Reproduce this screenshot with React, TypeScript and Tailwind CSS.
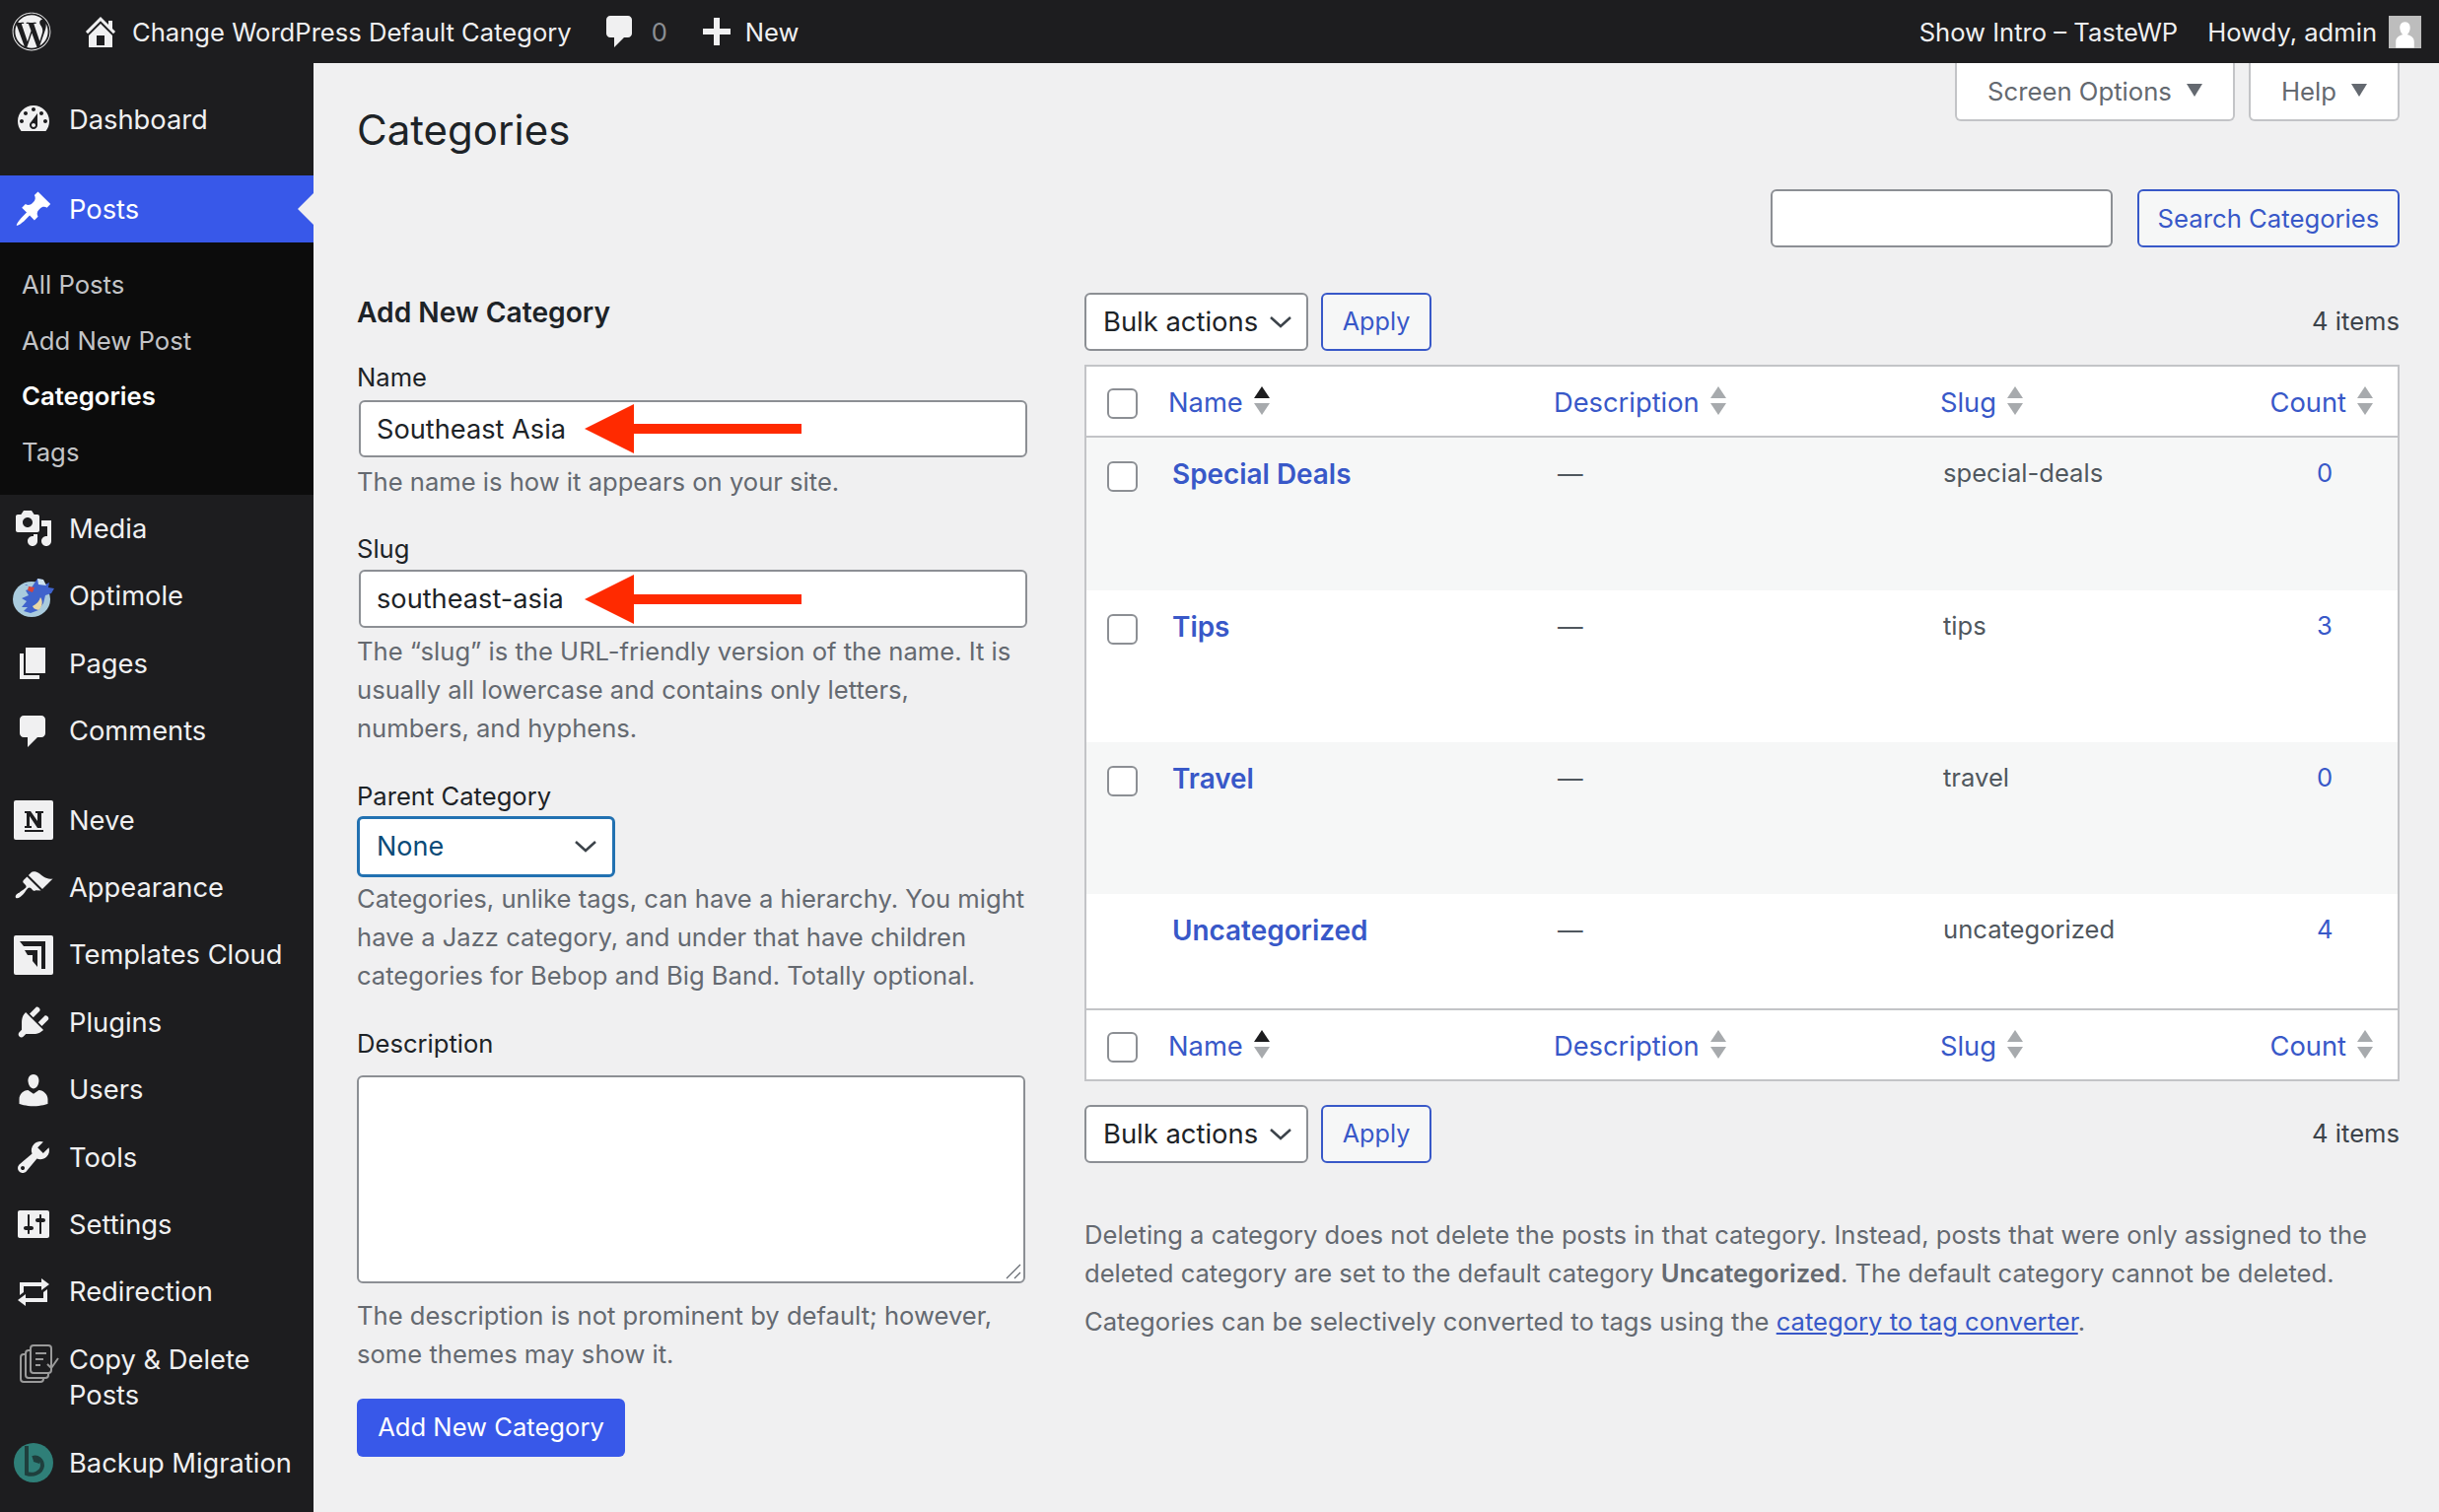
import type { ReactNode } from "react";
import { FaWordpress } from "react-icons/fa";

// dashicons paths, 20x20 box
const paths = {
  dashboard:
    "M3.76 16h12.48c1.1-1.37 1.76-3.11 1.76-5 0-4.42-3.58-8-8-8s-8 3.58-8 8c0 1.89.66 3.63 1.76 5zM10 4c.55 0 1 .45 1 1s-.45 1-1 1-1-.45-1-1 .45-1 1-1zM6 6c.55 0 1 .45 1 1s-.45 1-1 1-1-.45-1-1 .45-1 1-1zm8 0c.55 0 1 .45 1 1s-.45 1-1 1-1-.45-1-1 .45-1 1-1zm-5.37 5.55L12 7v6c0 1.1-.9 2-2 2s-2-.9-2-2c0-.57.24-1.08.63-1.45zM4 10c.55 0 1 .45 1 1s-.45 1-1 1-1-.45-1-1 .45-1 1-1zm12 0c.55 0 1 .45 1 1s-.45 1-1 1-1-.45-1-1 .45-1 1-1zm-5 3c0-.55-.45-1-1-1s-1 .45-1 1 .45 1 1 1 1-.45 1-1z",
  post: "M10.44 3.02l1.82-1.82 6.36 6.35-1.83 1.82c-1.05-.68-2.48-.57-3.41.36l-.75.75c-.92.93-1.04 2.35-.35 3.41l-1.83 1.82-2.41-2.41-2.8 2.79c-.42.42-3.38 2.71-3.8 2.29s1.86-3.39 2.28-3.81l2.79-2.79L4.1 9.36l1.83-1.82c1.05.69 2.48.57 3.4-.36l.75-.75c.93-.92 1.05-2.35.36-3.41z",
  media:
    "M13 11V4c0-.55-.45-1-1-1h-1.67L9 1H5L3.67 3H2c-.55 0-1 .45-1 1v7c0 .55.45 1 1 1h10c.55 0 1-.45 1-1zM7 4.5c1.38 0 2.5 1.12 2.5 2.5S8.38 9.5 7 9.5 4.5 8.38 4.5 7 5.62 4.5 7 4.5zM14 6h5v10.5c0 1.38-1.12 2.5-2.5 2.5S14 17.88 14 16.5s1.12-2.5 2.5-2.5c.17 0 .34.02.5.05V9h-3V6zm-4 8.05V13h2v3.5c0 1.38-1.12 2.5-2.5 2.5S7 17.88 7 16.5 8.12 14 9.5 14c.17 0 .34.02.5.05z",
  page: "M6 15V2h10v13H6zm-1 1h8v2H3V5h2v11z",
  comment: "M5 2h9c1.1 0 2 .9 2 2v7c0 1.1-.9 2-2 2h-2l-5 5v-5H5c-1.1 0-2-.9-2-2V4c0-1.1.9-2 2-2z",
  appearance:
    "M14.48 11.06L7.41 3.99l1.5-1.5c.5-.56 2.3-.47 3.51.32 1.21.8 1.43 1.28 2.91 2.1 1.18.64 2.45 1.26 4.45.85zm-.71.71L6.7 4.7 4.93 6.47c-.39.39-.39 1.02 0 1.41l1.06 1.06c.39.39.39 1.03 0 1.42-.6.6-1.43 1.11-2.21 1.69-.35.26-.7.53-1.01.84C1.43 13.23.4 14.75 1.1 15.45c.7.7 2.22-.33 3.56-1.67.31-.31.58-.66.85-1.02.57-.78 1.08-1.61 1.69-2.21.39-.39 1.02-.39 1.41 0l1.06 1.06c.39.39 1.02.39 1.41 0z",
  plugins:
    "M13.11 4.36L9.87 7.6 8 5.73l3.24-3.24c.35-.34 1.05-.2 1.56.32.52.51.66 1.21.31 1.55zm-8 1.77l.91-1.12 9.01 9.01-1.19.84c-.71.71-2.63 1.16-3.82 1.16H6.14L4.9 17.26c-.59.59-1.54.59-2.12 0-.59-.58-.59-1.53 0-2.12l1.24-1.24v-3.88c0-1.13.4-3.19 1.09-3.89zm7.26 3.97l3.24-3.24c.34-.35 1.04-.21 1.55.31.52.51.66 1.21.31 1.55l-3.24 3.25z",
  users:
    "M10 9.25c-2.27 0-2.73-3.44-2.73-3.44C7 4.02 7.82 2 9.97 2c2.16 0 2.98 2.02 2.71 3.81 0 0-.41 3.44-2.68 3.44zm0 2.57L12.72 10c2.39 0 4.52 2.33 4.52 4.53v2.49s-3.65 1.13-7.24 1.13c-3.65 0-7.24-1.13-7.24-1.13v-2.49c0-2.25 1.94-4.48 4.47-4.48z",
  tools:
    "M16.68 9.77c-1.34 1.34-3.3 1.67-4.95.99l-5.41 6.52c-.99.99-2.59.99-3.58 0s-.99-2.59 0-3.57l6.52-5.42c-.68-1.65-.35-3.61.99-4.95 1.28-1.28 3.12-1.62 4.72-1.06l-2.89 2.89 2.82 2.82 2.86-2.87c.53 1.58.18 3.39-1.08 4.65zM3.81 16.21c.4.39 1.04.39 1.43 0 .4-.4.4-1.04 0-1.43-.39-.4-1.03-.4-1.43 0-.39.39-.39 1.03 0 1.43z",
  settings:
    "M18 16V4c0-.55-.45-1-1-1H3c-.55 0-1 .45-1 1v12c0 .55.45 1 1 1h14c.55 0 1-.45 1-1zM8 11h1c.55 0 1 .45 1 1s-.45 1-1 1H8v1.5c0 .28-.22.5-.5.5s-.5-.22-.5-.5V13H6c-.55 0-1-.45-1-1s.45-1 1-1h1V5.5c0-.28.22-.5.5-.5s.5.22.5.5V11zm5-2h-1c-.55 0-1-.45-1-1s.45-1 1-1h1V5.5c0-.28.22-.5.5-.5s.5.22.5.5V7h1c.55 0 1 .45 1 1s-.45 1-1 1h-1v5.5c0 .28-.22.5-.5.5s-.5-.22-.5-.5V9z",
  repeat: "M5 7v3l-2 1.5V5h11V3l4 3.01L14 9V7H5zm10 6v-3l2-1.5V15H6v2l-4-3.01L6 11v2h9z",
  home: "M16 8.5l1.53 1.53-1.06 1.06L10 4.62l-6.47 6.47-1.06-1.06L10 2.5l4 4v-2h2v4zm-6-2.46l6 5.99V18H4v-5.97zM12 17v-5H8v5h4z",
  plus: "M17 8.5v3h-5.5V17h-3v-5.5H3v-3h5.5V3h3v5.5H17z",
};

function Dash({ d, className }: { d: string; className?: string }) {
  return (
    <svg viewBox="0 0 20 20" className={className} fill="currentColor">
      <path d={d} />
    </svg>
  );
}

function Optimole() {
  return (
    <svg viewBox="0 0 44 44" className="h-[44px] w-[44px]">
      <ellipse cx="20" cy="25" rx="19" ry="18" fill="#a9cbdd" />
      <path d="M13 10l7 3 6-9 5 1 3 5 4-2-1 5 6 1-3 5-6 2-2 8-5 7-8 3-7-2 4-4-6 0 5-6-5-3 7-3-3-5 5-2-4-4z" fill="#3f63cc" />
      <path d="M26 4l6 1 3 6-8-1z" fill="#cfe3ee" />
      <path d="M17 12l6 1-2 5-5-2z" fill="#d8443a" />
      <path d="M29 23c3 4 2 10-2 13-4-1-5-2-6-4 4-2 7-5 8-9z" fill="#e9d8a6" />
    </svg>
  );
}

function Neve() {
  return (
    <svg viewBox="0 0 40 40" className="h-[40px] w-[40px]">
      <rect width="40" height="40" rx="2" fill="#f0f0f1" />
      <path d="M11 11h6l7 10v-8h-2v-2h8v2h-2v15h-4l-8-12v10h2v2h-7v-2h2V13h-2z" fill="#1d1d1f" />
      <rect x="11" y="30" width="19" height="2" fill="#1d1d1f" />
    </svg>
  );
}

function TemplatesCloud() {
  return (
    <svg viewBox="0 0 40 40" className="h-[40px] w-[40px]">
      <rect width="40" height="40" rx="2" fill="#f0f0f1" />
      <path d="M6 6h26v28h-4V11H10z" fill="#1d1d1f" />
      <path d="M11 15h13v17l-5-6v-6h-5z" fill="#1d1d1f" />
    </svg>
  );
}

function CopyDelete() {
  return (
    <svg viewBox="0 0 40 40" className="h-[40px] w-[40px]" fill="none" stroke="#9a9a9a" strokeWidth="2">
      <rect x="1" y="10" width="23" height="28" rx="3" />
      <rect x="6" y="6" width="23" height="28" rx="3" fill="#1d1d1f" />
      <rect x="11" y="1" width="21" height="28" rx="3" fill="#1d1d1f" />
      <path d="M16 9h11M16 15h8M16 21h5M28 20l4 4 7-10" />
    </svg>
  );
}

function Backup() {
  return (
    <svg viewBox="0 0 40 40" className="h-[40px] w-[40px]">
      <circle cx="20" cy="20" r="20" fill="#2f7f78" />
      <path d="M13 3v28c6 2 15 0 16-8 0-6-5-10-10-8" fill="none" stroke="#1f3f3d" strokeWidth="4" />
      <path d="M19 13c6 0 8 4 7 8l-6-2z" fill="#1f3f3d" />
    </svg>
  );
}

function Avatar() {
  return (
    <svg viewBox="0 0 32 32" className="h-[33px] w-[33px]">
      <rect width="32" height="32" fill="#bdbdbd" />
      <path d="M16 6c-3.600 0-5.400 3-5 6.500.3 2.500 1.500 5 3 6-4 1-7 3-7 7v6h18v-6c0-4-3-6-7-7 1.500-1 2.700-3.500 3-6 .4-3.500-1.400-6.500-5-6.500z" fill="#fff" />
    </svg>
  );
}

function NavRow({ icon, label, active }: { icon: ReactNode; label: string; active?: boolean }) {
  return (
    <div className={`relative flex h-[68.4px] items-center text-[27.3px] text-[#f0f0f1] ${active ? "bg-[#3858e9] text-white" : ""}`}>
      <span className="flex w-[70px] shrink-0 items-center justify-center pr-[2px]">{icon}</span>
      <span className="pt-[2px]">{label}</span>
      {active && (
        <span className="absolute right-0 top-1/2 h-0 w-0 -translate-y-1/2 border-y-[16px] border-r-[16px] border-y-transparent border-r-[#f0f0f1]" />
      )}
    </div>
  );
}

function Sidebar() {
  const icon = "h-[40px] w-[40px]";
  const sub = "flex h-[56.5px] items-center pl-[22px] pt-[2px]";
  return (
    <aside className="w-[318px] shrink-0 bg-[#1d1d1f] pt-[23px]">
      <NavRow icon={<Dash d={paths.dashboard} className={icon} />} label="Dashboard" />
      <div className="mt-[22.5px]">
        <NavRow active icon={<Dash d={paths.post} className={icon} />} label="Posts" />
      </div>
      <div className="bg-[#0c0c0c] pb-[16px] pt-[14px] text-[25.7px] text-[#c3c4c7]">
        <div className={sub}>All Posts</div>
        <div className={sub}>Add New Post</div>
        <div className={`${sub} font-semibold text-white`}>Categories</div>
        <div className={sub}>Tags</div>
      </div>
      <NavRow icon={<Dash d={paths.media} className={icon} />} label="Media" />
      <NavRow icon={<Optimole />} label="Optimole" />
      <NavRow icon={<Dash d={paths.page} className={icon} />} label="Pages" />
      <NavRow icon={<Dash d={paths.comment} className={icon} />} label="Comments" />
      <div className="mt-[22px]">
        <NavRow icon={<Neve />} label="Neve" />
      </div>
      <NavRow icon={<Dash d={paths.appearance} className={icon} />} label="Appearance" />
      <NavRow icon={<TemplatesCloud />} label="Templates Cloud" />
      <NavRow icon={<Dash d={paths.plugins} className={icon} />} label="Plugins" />
      <NavRow icon={<Dash d={paths.users} className={icon} />} label="Users" />
      <NavRow icon={<Dash d={paths.tools} className={icon} />} label="Tools" />
      <NavRow icon={<Dash d={paths.settings} className={icon} />} label="Settings" />
      <NavRow icon={<Dash d={paths.repeat} className={icon} />} label="Redirection" />
      <div className="flex h-[105px] items-start pt-[17px] text-[27.3px] leading-[36px] text-[#f0f0f1]">
        <span className="flex w-[70px] shrink-0 pl-[20px] pt-[2px]">
          <CopyDelete />
        </span>
        <span>
          Copy &amp; Delete
          <br />
          Posts
        </span>
      </div>
      <NavRow icon={<Backup />} label="Backup Migration" />
    </aside>
  );
}

function TopBar() {
  return (
    <header className="flex h-[64px] items-center bg-[#1d1d1f] text-[25.6px] text-[#f0f0f1]">
      <FaWordpress className="ml-[12px] h-[40px] w-[40px]" />
      <Dash d={paths.home} className="ml-[30px] h-[40px] w-[40px]" />
      <span className="ml-[12px] pt-[2px]">Change WordPress Default Category</span>
      <Dash d={paths.comment} className="ml-[29px] h-[40px] w-[40px]" />
      <span className="ml-[12px] pt-[2px] text-[#8c8f94]">0</span>
      <Dash d={paths.plus} className="ml-[30px] h-[40px] w-[40px]" />
      <span className="ml-[9px] pt-[2px]">New</span>
      <span className="ml-auto pt-[2px]">Show Intro – TasteWP</span>
      <span className="ml-[30px] pt-[2px]">Howdy, admin</span>
      <span className="ml-[12px] mr-[18px]">
        <Avatar />
      </span>
    </header>
  );
}

function Caret() {
  return <span className="ml-[15px] mt-[-4px] h-0 w-0 border-x-[8px] border-t-[13px] border-x-transparent border-t-[#646970]" />;
}

function Sort({ active }: { active?: boolean }) {
  return (
    <span className="ml-[11px] flex flex-col gap-[5px] self-start pt-[3px]">
      <span className={`h-0 w-0 border-x-[8px] border-b-[12px] border-x-transparent ${active ? "border-b-[#1d1d1f]" : "border-b-[#a7aaad]"}`} />
      <span className="h-0 w-0 border-x-[8px] border-t-[12px] border-x-transparent border-t-[#a7aaad]" />
    </span>
  );
}

function Checkbox() {
  return <span className="ml-[21px] block h-[31px] w-[31px] rounded-[6px] border-2 border-[#8c8f94] bg-white" />;
}

function HeadRow({ border }: { border: string }) {
  return (
    <div className={`grid h-[72px] grid-cols-[75px_400px_391px_329px_1fr] items-center bg-white pt-[5px] text-[27.3px] text-[#3858c8] ${border}`}>
      <Checkbox />
      <div className="flex items-center pl-[8px]">
        Name
        <Sort active />
      </div>
      <div className="-ml-[1px] flex items-center">
        Description
        <Sort />
      </div>
      <div className="flex items-center">
        Slug
        <Sort />
      </div>
      <div className="flex items-center justify-end pr-[25px]">
        Count
        <Sort />
      </div>
    </div>
  );
}

const rows = [
  { name: "Special Deals", slug: "special-deals", count: "0", h: "h-[155px]", bg: "bg-[#f6f7f7]", check: true },
  { name: "Tips", slug: "tips", count: "3", h: "h-[154px]", bg: "bg-white", check: true },
  { name: "Travel", slug: "travel", count: "0", h: "h-[154px]", bg: "bg-[#f6f7f7]", check: true },
  { name: "Uncategorized", slug: "uncategorized", count: "4", h: "h-[116px]", bg: "bg-white", check: false },
];

function BulkBar() {
  return (
    <div className="flex h-[59px] items-center">
      <div className="flex h-[59px] w-[227px] items-center justify-between rounded-[6px] border-2 border-[#8c8f94] bg-white pl-[17px] pr-[15px] text-[27.4px] text-[#1d2327]">
        Bulk actions
        <svg viewBox="0 0 22 12" className="h-[12px] w-[22px]" fill="none" stroke="#3c434a" strokeWidth="2.500">
          <path d="M1 1l10 9 10-9" />
        </svg>
      </div>
      <div className="ml-[13px] flex h-[59px] w-[112px] items-center justify-center rounded-[6px] border-2 border-[#3858c8] bg-[#f6f7f7] text-[25.2px] text-[#3858c8]">
        Apply
      </div>
      <span className="ml-auto text-[#3c434a]">4 items</span>
    </div>
  );
}

const hint = "text-[#646970] leading-[39px]";

function AddForm() {
  const field = "rounded-[6px] border-2 border-[#8c8f94] bg-white";
  const label = "h-[36px] leading-[36px] text-[#1d2327]";
  return (
    <section className="w-[738px] shrink-0 text-[25.6px]">
      <h2 className="mt-[46px] h-[40px] text-[28.2px] font-semibold leading-[40px] text-[#1d2327]">Add New Category</h2>
      <div className={`mt-[28px] ${label}`}>Name</div>
      <div className={`relative ml-[2px] mt-[5px] flex h-[58px] w-[678px] items-center pl-[16px] text-[27.2px] ${field} text-[#1d2327]`}>
        <span className="pt-[2px]">Southeast Asia</span>
        <RedArrow />
      </div>
      <p className={`mt-[5px] ${hint}`}>The name is how it appears on your site.</p>
      <div className={`mt-[30.5px] ${label}`}>Slug</div>
      <div className={`relative ml-[2px] mt-[3.5px] flex h-[59px] w-[678px] items-center pl-[16px] text-[27.2px] ${field} text-[#1d2327]`}>
        <span className="pt-[1px]">southeast-asia</span>
        <RedArrow />
      </div>
      <p className={`mt-[4px] w-[665px] ${hint}`}>
        The “slug” is the URL-friendly version of the name. It is usually all lowercase and contains only letters, numbers, and hyphens.
      </p>
      <div className={`mt-[31.5px] ${label}`}>Parent Category</div>
      <div className="mt-[2.5px] flex h-[62px] w-[262px] items-center justify-between rounded-[6px] border-[3px] border-[#2271b1] bg-white pl-[17px] pr-[16px] text-[27px] text-[#0a4b78]">
        None
        <svg viewBox="0 0 22 12" className="h-[12px] w-[22px]" fill="none" stroke="#3c434a" strokeWidth="2.500">
          <path d="M1 1l10 9 10-9" />
        </svg>
      </div>
      <p className={`mt-[2px] w-[680px] ${hint}`}>
        Categories, unlike tags, can have a hierarchy. You might have a Jazz category, and under that have children categories for Bebop and Big Band. Totally optional.
      </p>
      <div className={`mt-[31.5px] ${label}`}>Description</div>
      <div className={`relative mt-[14.5px] h-[211px] w-[678px] ${field}`}>
        <svg viewBox="0 0 16 16" className="absolute bottom-[2px] right-[2px] h-[16px] w-[16px]" stroke="#646970" strokeWidth="1.200">
          <path d="M1 15L15 1M9 15l6-6" />
        </svg>
      </div>
      <p className={`mt-[13px] w-[680px] ${hint}`}>The description is not prominent by default; however, some themes may show it.</p>
      <div className="mt-[26px] flex h-[59px] w-[272px] items-center justify-center rounded-[6px] bg-[#3858e9] text-white">Add New Category</div>
    </section>
  );
}

// annotation drawn over the inputs
function RedArrow() {
  return (
    <svg viewBox="0 0 220 50" className="absolute left-[227px] top-1/2 h-[50px] w-[220px] -translate-y-1/2">
      <path d="M0 25L50 0v20h170v10H50v20z" fill="#ff2a00" />
    </svg>
  );
}

function CategoriesTable() {
  return (
    <section className="min-w-0 flex-1 text-[25.6px]">
      <div className="mt-[46px]">
        <BulkBar />
      </div>
      <div className="mt-[14px] border-2 border-[#c3c4c7]">
        <HeadRow border="border-b-2 border-[#c3c4c7]" />
        {rows.map((r) => (
          <div key={r.name} className={`grid grid-cols-[75px_400px_391px_329px_1fr] ${r.h} ${r.bg}`}>
            <div className="pt-[24px]">{r.check && <Checkbox />}</div>
            <div className="pl-[12px] pt-[18px] text-[27.9px] font-semibold leading-[39px] text-[#3858c8]">{r.name}</div>
            <div className="pl-[3px] pt-[17px] leading-[39px] text-[#50575e]">—</div>
            <div className="pl-[3px] pt-[16px] leading-[39px] text-[#50575e]">{r.slug}</div>
            <div className="pl-[53px] pt-[16px] leading-[39px] text-[#3858c8]">{r.count}</div>
          </div>
        ))}
        <HeadRow border="border-t-2 border-[#c3c4c7]" />
      </div>
      <div className="mt-[24px]">
        <BulkBar />
      </div>
      <p className={`mt-[52.5px] ${hint}`}>
        Deleting a category does not delete the posts in that category. Instead, posts that were only assigned to the deleted category are set to the default category{" "}
        <strong className="font-semibold">Uncategorized</strong>. The default category cannot be deleted.
      </p>
      <p className={`mt-[10px] ${hint}`}>
        Categories can be selectively converted to tags using the <a className="text-[#3858c8] underline">category to tag converter</a>.
      </p>
    </section>
  );
}

export default function App() {
  return (
    <div className="h-[1534px] w-[2474px] overflow-hidden bg-[#f0f0f1] [font-family:Inter,sans-serif]">
      <TopBar />
      <div className="flex h-[1470px]">
        <Sidebar />
        <main className="min-w-0 flex-1 pl-[44px] pr-[40px]">
          <div className="flex h-[128px] items-start justify-between">
            <h1 className="mt-[40px] h-[56px] text-[42px] leading-[56px] text-[#1d2327]">Categories</h1>
            <div className="flex gap-[14px] pt-[2px] text-[25.7px] text-[#646970]">
              <div className="-mt-[2px] flex h-[59px] w-[284px] items-center justify-center rounded-b-[6px] border-2 border-t-0 border-[#c3c4c7] bg-white pt-[2px]">
                Screen Options
                <Caret />
              </div>
              <div className="-mt-[2px] flex h-[59px] w-[153px] items-center justify-center rounded-b-[6px] border-2 border-t-0 border-[#c3c4c7] bg-white pt-[2px]">
                Help
                <Caret />
              </div>
            </div>
          </div>
          <div className="flex h-[59px] justify-end gap-[25px] text-[25.7px]">
            <div className="h-[59px] w-[347px] rounded-[6px] border-2 border-[#8c8f94] bg-white" />
            <div className="flex h-[59px] w-[266px] items-center justify-center rounded-[6px] border-2 border-[#3858c8] bg-[#f6f7f7] pt-[2px] text-[#3858c8]">
              Search Categories
            </div>
          </div>
          <div className="flex">
            <AddForm />
            <CategoriesTable />
          </div>
        </main>
      </div>
    </div>
  );
}
